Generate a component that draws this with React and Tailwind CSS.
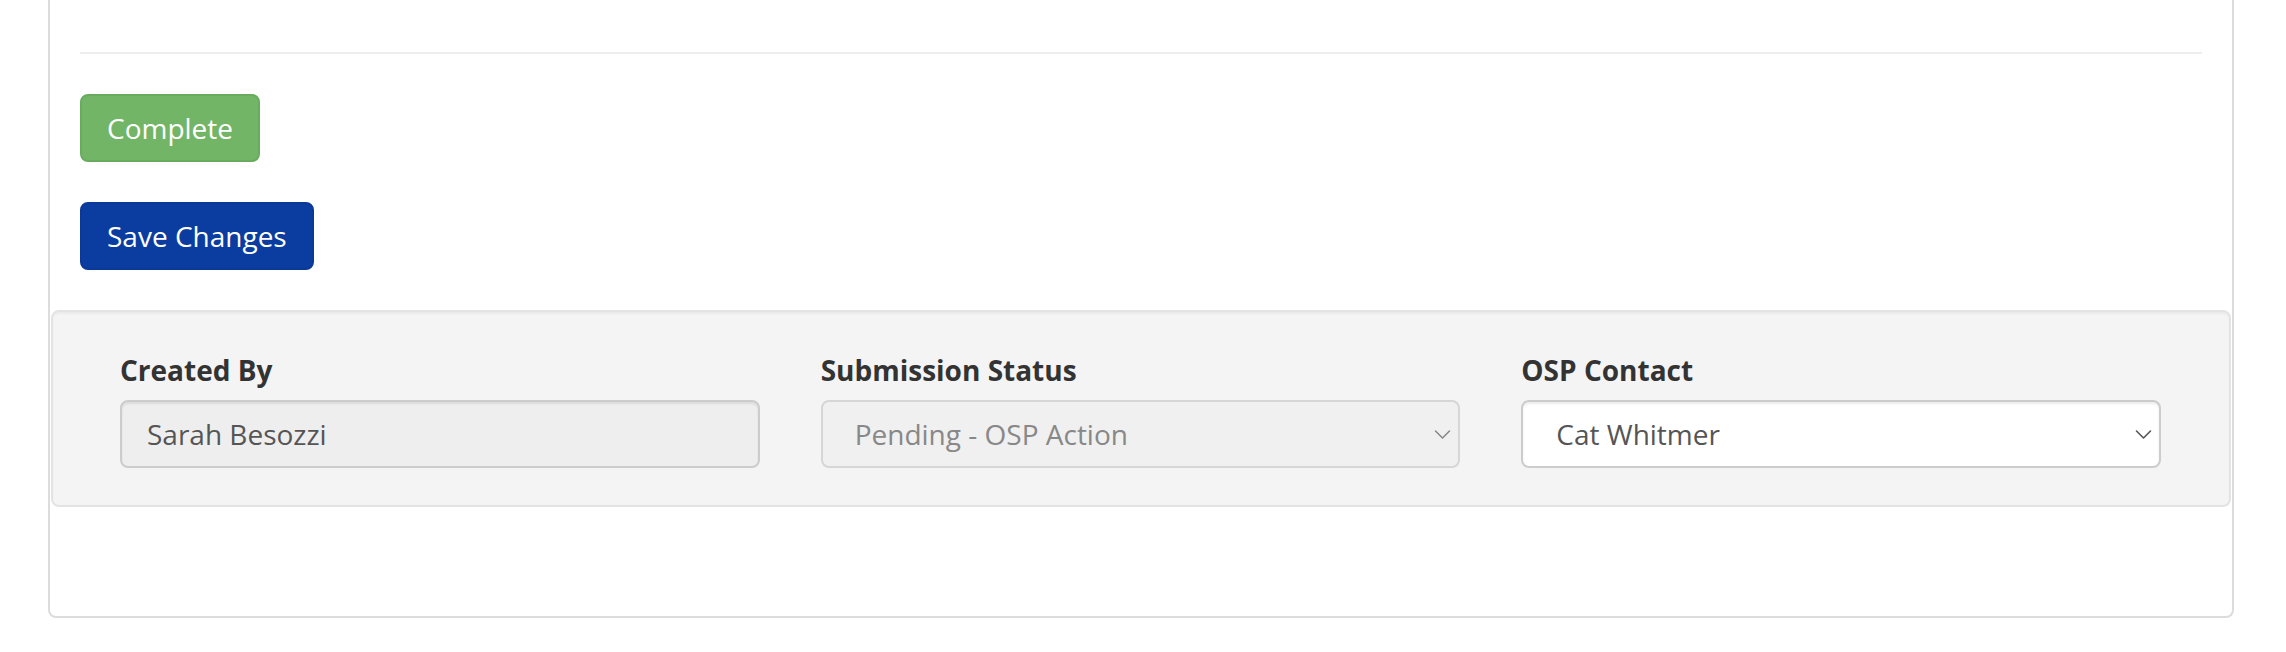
import React from "react";

function Chevron({ color }) {
  return (
    <svg width="17" height="11" viewBox="0 0 17 11" fill="none" className="shrink-0">
      <path d="M1.5 2 L8.5 9 L15.5 2" stroke={color} strokeWidth="1.6" strokeLinecap="round" strokeLinejoin="round" />
    </svg>
  );
}

function Field({ label, children }) {
  return (
    <div className="flex flex-col">
      <label className="mb-[10px] text-[28px] leading-[40px] font-bold text-[#333]">{label}</label>
      {children}
    </div>
  );
}

export default function App() {
  return (
    <div className="min-h-screen bg-white font-['Open_Sans',sans-serif]">
      <div className="ml-[48px] w-[2186px] border-2 border-t-0 border-[#dcdcdc] rounded-b-[8px] bg-white pb-[109px]">
        <div className="px-[30px] pt-[52px]">
          <hr className="border-0 border-t-2 border-[#eeeeee]" />
          <div className="mt-[40px] flex">
            <button className="h-[68px] rounded-[8px] border-2 border-[#6aac5e] bg-[#72b566] px-[25px] text-[28px] leading-[40px] text-white">
              Complete
            </button>
          </div>
          <div className="mt-[40px] flex">
            <button className="h-[68px] rounded-[8px] border-2 border-[#0a399a] bg-[#0b3c9f] px-[25px] text-[28px] leading-[40px] text-white">
              Save Changes
            </button>
          </div>
        </div>
        <div className="mx-[1px] mt-[40px] rounded-[8px] border-2 border-[#e3e3e3] bg-[#f4f4f4] pl-[67px] pr-[68px] pt-[38px] pb-[37px] shadow-[inset_0_2px_2px_rgba(0,0,0,0.04)]">
          <div className="grid grid-cols-3 gap-[61px]">
            <Field label="Created By">
              <div className="flex h-[68px] items-center rounded-[8px] border-2 border-[#cccccc] bg-[#eeeeee] pl-[25px] text-[28px] text-[#555] shadow-[inset_0_2px_2px_rgba(0,0,0,0.075)]">
                Sarah Besozzi
              </div>
            </Field>
            <Field label="Submission Status">
              <div className="flex h-[68px] items-center justify-between rounded-[8px] border-2 border-[#d6d6d6] bg-[#f0f0f0] pl-[32px] pr-[7px] text-[28px] text-[#888]">
                <span>Pending - OSP Action</span>
                <Chevron color="#8a8a8a" />
              </div>
            </Field>
            <Field label="OSP Contact">
              <div className="flex h-[68px] items-center justify-between rounded-[8px] border-2 border-[#cccccc] bg-white pl-[33px] pr-[7px] text-[28px] text-[#555] shadow-[inset_0_2px_2px_rgba(0,0,0,0.075)]">
                <span>Cat Whitmer</span>
                <Chevron color="#555" />
              </div>
            </Field>
          </div>
        </div>
      </div>
    </div>
  );
}
